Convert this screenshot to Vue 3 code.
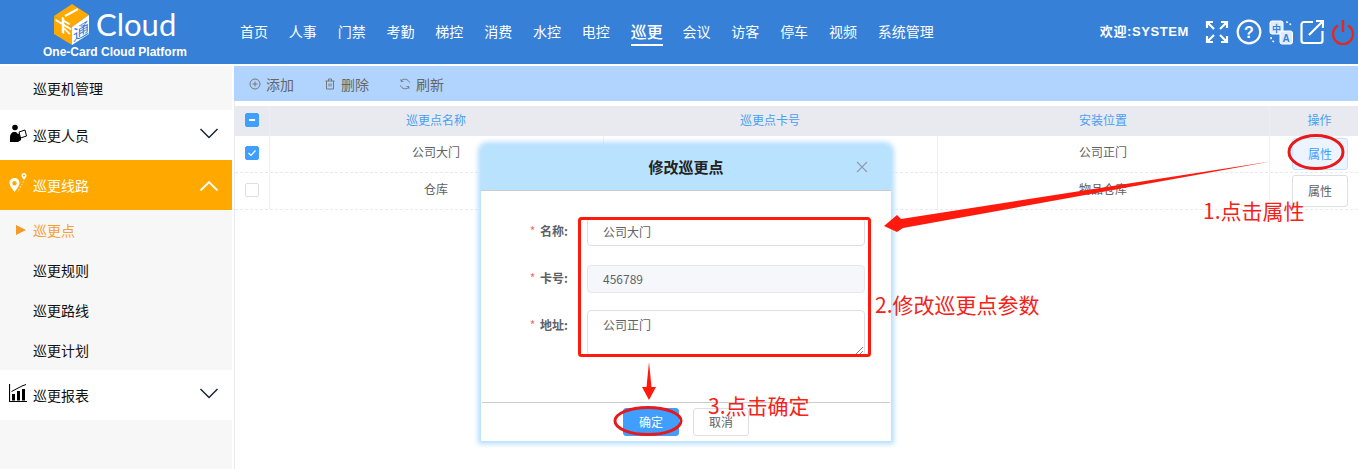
<script setup>
const nav = ['首页','人事','门禁','考勤','梯控','消费','水控','电控','巡更','会议','访客','停车','视频','系统管理']
const rows = [
  { name: '公司大门', card: '', place: '公司正门', checked: true },
  { name: '仓库', card: '', place: '物品仓库', checked: false }
]
</script>

<template>
  <div class="page">
    <header class="top">
      <div class="brand">
        <div class="logo-row">
          <svg class="cube" width="36" height="42" viewBox="0 0 36 42">
            <polygon points="18,0 35,11 18,23 0,12" fill="#ffa800"/>
            <polygon points="0,12 18,23 18,41 0,30" fill="#ffa800"/>
            <polygon points="18,23 35,11 35,30 18,41" fill="#fff"/>
            <line x1="11" y1="12" x2="24" y2="5" stroke="#fff" stroke-width="2"/>
            <text transform="matrix(1 .6 0 1 1 23)" font-size="17" fill="#fff" font-family="Noto Sans CJK SC" font-weight="700">卡</text>
            <text transform="matrix(1 -.6 0 1 19 38)" font-size="16" fill="#3680d8" font-family="Noto Sans CJK SC">通</text>
          </svg>
          <span class="cloud">Cloud</span>
        </div>
        <div class="platform">One-Card Cloud Platform</div>
      </div>
      <nav class="nav">
        <a v-for="n in nav" :key="n" :class="{ on: n === '巡更' }">{{ n }}</a>
      </nav>
      <div class="tools">
        <span class="welcome">欢迎:SYSTEM</span>
        <svg width="24" height="24" viewBox="0 0 24 24" fill="none" stroke="#fff" stroke-width="2.2" class="t1">
          <path d="M2 8V2h6M2 2l7 7M16 2h6v6M22 2l-7 7M2 16v6h6M2 22l7-7M22 16v6h-6M22 22l-7-7"/>
        </svg>
        <svg width="26" height="26" viewBox="0 0 26 26" fill="none" stroke="#fff" class="t2">
          <circle cx="13" cy="13" r="11.3" stroke-width="2.2"/>
          <text x="13" y="19" font-size="16" text-anchor="middle" fill="#fff" stroke="none" font-family="Liberation Sans" font-weight="700">?</text>
        </svg>
        <svg width="24" height="26" viewBox="0 0 24 26" fill="none" stroke="#fff" class="t3">
          <rect x="1" y="2" width="13" height="13" rx="2" fill="#dfecfa" stroke="#fff"/>
          <text x="7.500" y="12.500" font-size="9" text-anchor="middle" fill="#3680d8" stroke="none" font-family="Noto Sans CJK SC" font-weight="700">中</text>
          <rect x="11" y="12" width="12.500" height="13" rx="2" fill="#dfecfa" stroke="#fff"/>
          <text x="17.200" y="22.500" font-size="10" text-anchor="middle" fill="#3680d8" stroke="none" font-family="Liberation Sans" font-weight="700">A</text>
          <path d="M17 3c3 0 5 2 5 5M2 18c0 3 2 5 5 5" stroke-width="1.500" stroke-dasharray="2 2"/>
        </svg>
        <svg width="24" height="24" viewBox="0 0 24 24" fill="none" stroke="#fff" stroke-width="2.200" class="t4">
          <path d="M13 2H4a2.500 2.500 0 0 0-2.500 2.500v16A2.500 2.500 0 0 0 4 23h16a2.500 2.500 0 0 0 2.500-2.500V11"/>
          <path d="M9 15 23 1M16 1h7v7"/>
        </svg>
        <svg width="24" height="26" viewBox="0 0 24 26" fill="none" stroke="#e8261a" stroke-width="2.400" class="t5">
          <path d="M7 6.500a10 10 0 1 0 10 0"/>
          <path d="M12 1v12"/>
        </svg>
      </div>
    </header>

    <div class="main">
      <aside class="side">
        <div class="sub first"><span>巡更机管理</span></div>
        <div class="group">
          <svg class="gi" width="18" height="18" viewBox="0 0 18 18">
            <circle cx="6" cy="3.500" r="2.800"/>
            <path d="M1 18V13c0-3 2-5 4-5h2l2 2 3-1v7l-3 2z"/>
            <path d="M10 8l6-2 1.500 6-6 2z" fill="#fff" stroke="#000" stroke-width="1"/>
          </svg>
          <span>巡更人员</span>
          <svg class="chev" width="20" height="12" viewBox="0 0 20 12" fill="none" stroke="#1a2433" stroke-width="1.500"><path d="M1.500 2 10 10.500 18.500 2"/></svg>
        </div>
        <div class="group active">
          <svg class="gi" width="18" height="20" viewBox="0 0 18 20" fill="#fff">
            <path fill-rule="evenodd" d="M5.500 5C2.500 5 .5 7.300.5 10c0 3 3 6 5 9 2-3 5-6 5-9 0-2.700-2-5-5-5zm0 3a2.200 2.200 0 1 1 0 4.400 2.200 2.200 0 0 1 0-4.400z"/>
            <path fill-rule="evenodd" d="M15 0c-1.500 0-2.500 1-2.500 2.500S14 5.500 15 7c1-1.500 2.500-3 2.500-4.500S16.500 0 15 0zm0 1.500a1 1 0 1 1 0 2 1 1 0 0 1 0-2z"/>
            <path d="M14.500 8c-1 3-2 4-3 6s-2 4-3 5" fill="none" stroke="#fff" stroke-width=".8" stroke-dasharray="1.500 1.500"/>
          </svg>
          <span>巡更线路</span>
          <svg class="chev up" width="20" height="12" viewBox="0 0 20 12" fill="none" stroke="#fff" stroke-width="1.800"><path d="M1.500 10.500 10 2l8.500 8.500"/></svg>
        </div>
        <div class="subs">
          <div class="sub cur"><i class="tri"></i><span>巡更点</span></div>
          <div class="sub"><span>巡更规则</span></div>
          <div class="sub"><span>巡更路线</span></div>
          <div class="sub"><span>巡更计划</span></div>
        </div>
        <div class="group">
          <svg class="gi" width="18" height="18" viewBox="0 0 18 18">
            <path d="M.500 0v17.500H18" fill="none" stroke="#000" stroke-width="1.200"/>
            <rect x="3" y="10" width="3" height="6.500"/><rect x="8" y="7" width="3" height="9.500"/><rect x="13" y="5" width="3" height="11.500"/>
            <path d="M2.500 7.500 13 2l4-1.500" fill="none" stroke="#000" stroke-width="1"/>
          </svg>
          <span>巡更报表</span>
          <svg class="chev" width="20" height="12" viewBox="0 0 20 12" fill="none" stroke="#1a2433" stroke-width="1.500"><path d="M1.500 2 10 10.500 18.500 2"/></svg>
        </div>
        <div class="side-rest"></div>
      </aside>

      <section class="content">
        <div class="toolbar">
          <span class="tbtn">
            <svg width="12" height="12" viewBox="0 0 12 12" fill="none" stroke="#777"><circle cx="6" cy="6" r="5"/><path d="M6 3.500v5M3.500 6h5"/></svg>添加
          </span>
          <span class="tbtn">
            <svg width="12" height="12" viewBox="0 0 12 12" fill="none" stroke="#777"><path d="M1.500 3h9M4.500 3V1h3v2M2.500 3v8h7V3M5 5.500v3M7 5.500v3"/></svg>删除
          </span>
          <span class="tbtn">
            <svg width="12" height="12" viewBox="0 0 12 12" fill="none" stroke="#777"><path d="M10.500 4.500A5 5 0 0 0 2 3M1.500 7.500A5 5 0 0 0 10 9"/><path d="M2 1v2.500h2.500M10 11V8.500H7.500" stroke-width=".8"/></svg>刷新
          </span>
        </div>
        <div class="thead">
          <div class="c0"><i class="cb blue"><b class="minus"></b></i></div>
          <div class="c1">巡更点名称</div>
          <div class="c2">巡更点卡号</div>
          <div class="c3">安装位置</div>
          <div class="c4"><span class="op">操作</span></div>
        </div>
        <div v-for="r in rows" :key="r.name" class="trow">
          <div class="c0">
            <i class="cb" :class="{ blue: r.checked }">
              <svg v-if="r.checked" width="10" height="10" viewBox="0 0 10 10" fill="none" stroke="#fff" stroke-width="1.200"><path d="M1.500 5 4 7.500 8.500 2.500"/></svg>
            </i>
          </div>
          <div class="c1">{{ r.name }}</div>
          <div class="c2">{{ r.card }}</div>
          <div class="c3">{{ r.place }}</div>
          <div class="c4"><button class="attr" :class="{ hot: r.checked }">属性</button></div>
        </div>
      </section>
    </div>

    <div class="modal">
      <div class="m-head">
        <span class="m-title">修改巡更点</span>
        <svg class="m-x" width="12" height="12" viewBox="0 0 12 12" stroke="#8f9bab" stroke-width="1.100"><path d="M1 1l10 10M11 1 1 11"/></svg>
      </div>
      <div class="m-body">
        <div class="f">
          <label><em>*</em> 名称:</label>
          <div class="inp">公司大门</div>
        </div>
        <div class="f">
          <label><em>*</em> 卡号:</label>
          <div class="inp dis">456789</div>
        </div>
        <div class="f third">
          <label><em>*</em> 地址:</label>
          <div class="inp area">公司正门
            <svg class="grip" width="7" height="7" viewBox="0 0 7 7" stroke="#666" stroke-width=".8"><path d="M7 0 0 7M7 4 4 7"/></svg>
          </div>
        </div>
      </div>
      <div class="m-foot">
        <button class="ok">确定</button>
        <button class="no">取消</button>
      </div>
    </div>

    <svg class="marks" width="1358" height="469" viewBox="0 0 1358 469">
      <ellipse cx="1316" cy="152" rx="27" ry="16.500" fill="none" stroke="#e8191a" stroke-width="3"/>
      <ellipse cx="648" cy="421" rx="33" ry="13.500" fill="none" stroke="#e8191a" stroke-width="3"/>
      <rect x="579.500" y="218.500" width="290" height="137" rx="2" fill="none" stroke="#ff1a0d" stroke-width="3"/>
      <polygon points="1273,161 901,219 897,215 884,226 897,232 903,228" fill="#ff1a0d"/>
      <polygon points="649,362 651.500,387 656,387 649,400 642,387 646.500,387" fill="#ff1a0d"/>
    </svg>
    <span class="note n1">1.点击属性</span>
    <span class="note n2">2.修改巡更点参数</span>
    <span class="note n3">3.点击确定</span>
  </div>
</template>

<style>
html, body { margin: 0; background: #fff; overflow: hidden; }
</style>

<style scoped>
.page { position: relative; width: 1358px; height: 469px; overflow: hidden; font-family: "Noto Sans CJK SC", "Noto Sans", sans-serif; background: #fff; }
.top { height: 64px; background: #3680d8; display: flex; align-items: flex-start; color: #fff; }
.brand { width: 240px; flex: none; }
.logo-row { display: flex; align-items: flex-start; padding: 4px 0 0 54px; height: 43px; box-sizing: border-box; }
.cube { flex: none; }
.cloud { font-family: Lato, sans-serif; font-size: 31px; line-height: 34px; margin: 3px 0 0 6px; }
.platform { font: 700 12px/14px "Liberation Sans", sans-serif; padding-left: 43px; margin-top: 2px; }
.nav { display: flex; gap: 20.83px; padding-top: 20px; font-size: 14px; line-height: 22px; }
.nav a { display: block; height: 26px; white-space: nowrap; }
.nav a.on { font-size: 16px; font-weight: 500; border-bottom: 2px solid #fff; margin-right: -1px; height: 24px; }
.tools { margin-left: auto; display: flex; align-items: center; height: 64px; padding-right: 3px; }
.welcome { font: 700 13px/16px "Liberation Sans", "Noto Sans CJK SC", sans-serif; letter-spacing: .6px; margin-right: 16px; }
.t1, .t2, .t3, .t4, .t5 { flex: none; margin-top: -1px; }
.t2, .t3, .t4, .t5 { margin-left: 7px; }
.main { display: flex; margin-top: 2px; height: 403px; }
.side { width: 232px; flex: none; display: flex; flex-direction: column; font-size: 14px; color: #111; }
.sub { height: 40px; display: flex; align-items: center; padding-left: 33px; background: #f7f7f7; position: relative; }
.sub.first { height: 44px; }
.subs { display: flex; flex-direction: column; }
.sub.cur { color: #f5a033; }
.tri { position: absolute; left: 16px; top: 15px; width: 0; height: 0; border-left: 10px solid #f39a2b; border-top: 5px solid transparent; border-bottom: 5px solid transparent; }
.group { height: 50px; display: flex; align-items: center; padding: 0 13px 0 9px; background: #fff; }
.group > span { margin-left: 6px; }
.gi { flex: none; margin-top: -4px; }
.chev { margin-left: auto; margin-top: -4px; }
.chev.up { margin-top: 2px; }
.group.active { background: #ffa800; color: #fff; }
.side-rest { flex: 1; background: #f7f7f7; }
.content { flex: 1; margin-left: 2px; border-left: 1px solid #e8eaf2; min-width: 0; }
.toolbar { height: 35px; background: #b0d4fe; display: flex; align-items: center; padding-left: 15px; margin-left: -1px; gap: 30px; font-size: 14px; color: #666; }
.tbtn { display: flex; align-items: center; gap: 5px; }
.thead, .trow { display: flex; font-size: 12px; text-align: center; }
.thead { height: 30px; margin-top: 5px; background: #e8eaef; color: #4a9ff5; line-height: 28px; }
.trow { height: 37px; box-sizing: border-box; border-bottom: 1px dashed #e8eaf2; color: #606266; line-height: 32px; }
.c0 { width: 35px; flex: none; border-right: 1px solid #eceef3; display: flex; justify-content: center; box-sizing: border-box; }
.thead .c0 { padding-top: 7px; }
.trow .c0 { padding-top: 10px; }
.c1, .c2, .c3 { flex: none; box-sizing: border-box; padding-right: 1px; border-right: 1px solid #eef0f4; }
.thead .c1, .thead .c2 { border-right-color: transparent; }
.thead .c3 { border-right-color: #eceef3; }
.c1, .c2 { width: 334px; }
.c3 { width: 332px; }
.c4 { flex: 1; position: relative; }
.op { display: block; padding-left: 11px; }
.cb { width: 14px; height: 14px; box-sizing: border-box; border: 1px solid #dcdfe6; border-radius: 2px; display: flex; align-items: center; justify-content: center; background: #fff; margin-right: 1px; }
.cb.blue { background: #409eff; border-color: #409eff; }
.minus { width: 6px; height: 2px; background: #fff; display: block; }
.attr { position: absolute; left: 22px; top: 2px; width: 56px; height: 32px; padding: 0; font: 12px/30px "Noto Sans CJK SC", sans-serif; color: #606266; background: #fff; border: 1px solid #dcdfe6; border-radius: 3px; }
.attr.hot { color: #409eff; background: #ecf5ff; border-color: #c6e2ff; }
.modal { position: absolute; left: 481px; top: 145px; width: 410px; height: 296px; background: #fff; border-radius: 6px 6px 0 0; box-shadow: 0 0 5px 3px #b4defd; display: flex; flex-direction: column; box-sizing: border-box; padding: 0 1px; }
.m-head { margin: 0 -1px; height: 46px; flex: none; box-sizing: border-box; background: #b9e2ff; border-bottom: 1px solid #ccc; border-radius: 6px 6px 0 0; display: flex; align-items: center; justify-content: center; position: relative; }
.m-title { font-size: 15px; font-weight: 700; color: #222; margin-top: -2px; }
.m-x { position: absolute; right: 23px; top: 16px; }
.m-body { flex: 1; padding-top: 27px; display: flex; flex-direction: column; gap: 19px; }
.f { display: flex; align-items: flex-start; }
.f.third { margin-top: -2px; }
.f.third label { padding-top: 2px; }
.f label { width: 86px; flex: none; text-align: right; font-size: 12px; font-weight: 700; color: #606266; line-height: 26px; margin-right: 19px; }
.f em { color: #f56c6c; font-style: normal; font-weight: 400; margin-right: 2px; }
.inp { width: 278px; height: 28px; box-sizing: border-box; border: 1px solid #dcdfe6; border-radius: 4px; padding-left: 15px; font-size: 12px; line-height: 26px; color: #606266; position: relative; }
.dis { background: #f5f7fa; border-color: #e4e7ed; }
.area { height: 46px; line-height: 28px; }
.grip { position: absolute; right: 1px; bottom: 1px; }
.m-foot { height: 39px; flex: none; border-top: 1px solid #ccc; display: flex; justify-content: center; align-items: flex-start; gap: 14px; padding-top: 5px; box-sizing: border-box; }
.m-foot button { width: 56px; height: 28px; padding: 0; font: 12px/26px "Noto Sans CJK SC", sans-serif; border-radius: 3px; }
.ok { background: #409eff; border: 1px solid #409eff; color: #fff; }
.no { background: #fff; border: 1px solid #dcdfe6; color: #606266; }
.marks { position: absolute; left: 0; top: 0; pointer-events: none; }
.note { position: absolute; color: #f5221a; font-size: 21px; line-height: 24px; white-space: nowrap; }
.n1 { left: 1203px; top: 198px; }
.n2 { left: 875px; top: 292px; }
.n3 { left: 708px; top: 393px; }
</style>
